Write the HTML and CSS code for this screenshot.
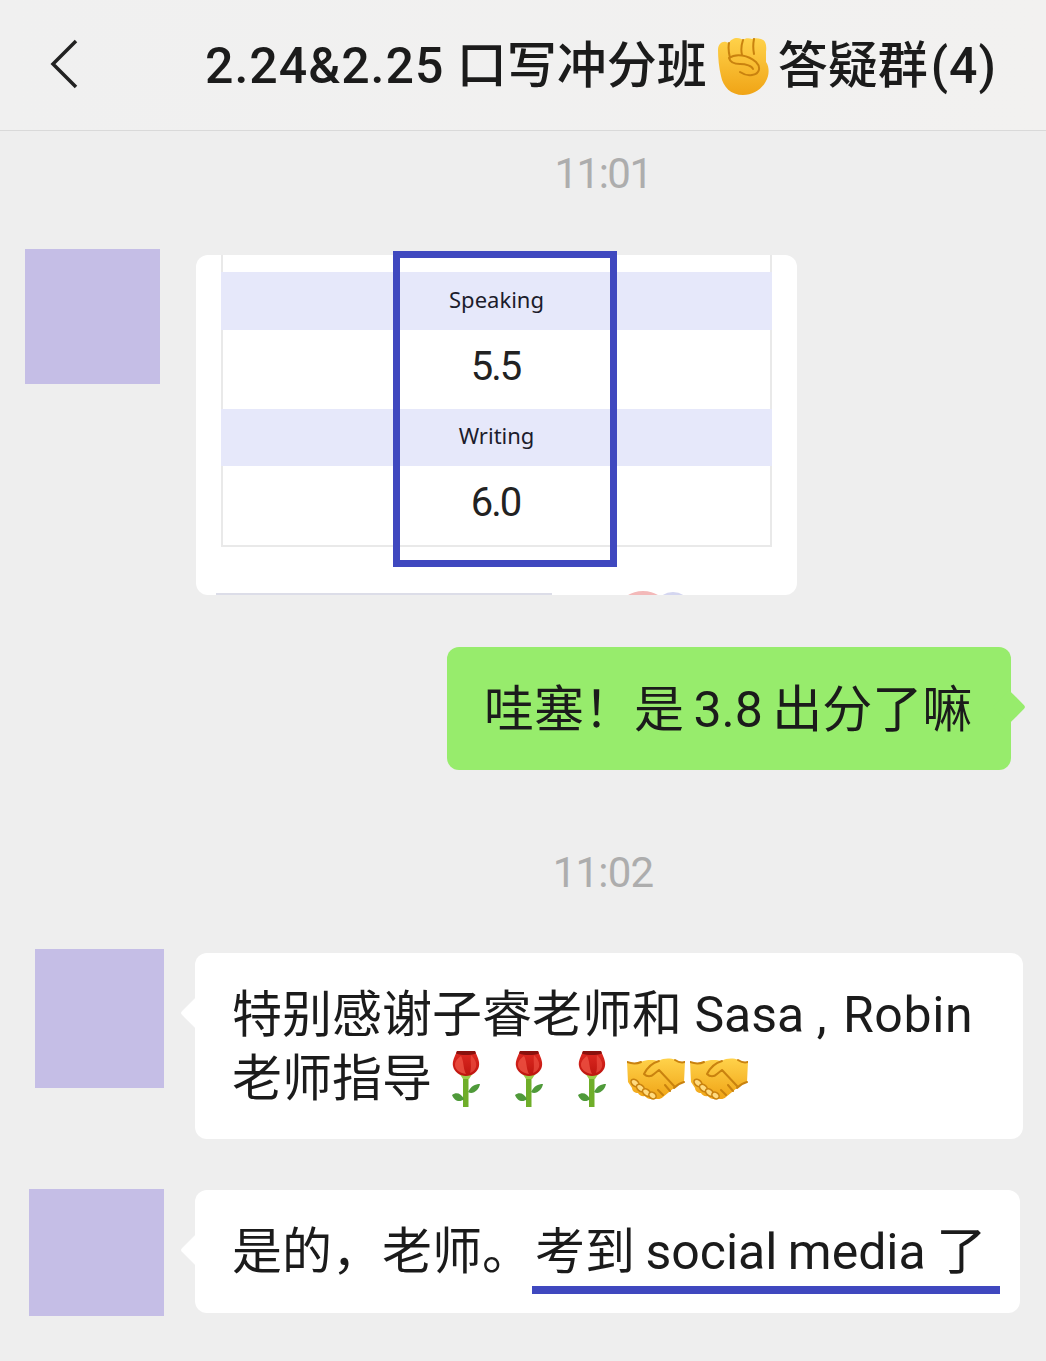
FILE: index.html
```html
<!DOCTYPE html>
<html lang="zh-CN">
<head>
    <meta charset="UTF-8">
    <title>答疑群</title>
    <link rel="stylesheet" href="styles.css">
</head>
<body>
    <svg class="defs" width="0" height="0" aria-hidden="true">
        <defs>
            <linearGradient id="skin" x1="0" y1="0" x2="0" y2="1">
                <stop offset="0" stop-color="#ffd24a"/>
                <stop offset="1" stop-color="#f0a416"/>
            </linearGradient>
            <linearGradient id="petal" x1="0" y1="0" x2="0" y2="1">
                <stop offset="0" stop-color="#e02a22"/>
                <stop offset="1" stop-color="#bd150f"/>
            </linearGradient>
            <symbol id="fist" viewBox="0 0 53 57">
                <path fill="url(#skin)" d="M2 12C2 6 6 3 10 4l3 1c1-3 5-5 8-5 3 0 5 1 6 2 2-2 6-2 9-1 2-1 6-1 9 0 4 1 6 5 5 13v10c3 4 3 10 2 14C49 49 39 57 27 57 15 57 7 49 5 38 3 30 2 20 2 12z"/>
                <path fill="none" stroke="#c9820f" stroke-width="2" stroke-linecap="round" stroke-linejoin="round" d="M13 5c-1 5 0 11 1 15M27 2c-2 6-2 11-1 15M38 1c-1 5-1 10 0 15M13 20c7-5 19-3 27 4 5 5 4 12-4 13-5 1-9-1-12-3M13 20c1 4 5 6 11 6 6 0 12 2 13 5"/>
            </symbol>
            <symbol id="rose" viewBox="0 0 28 58">
                <path fill="#6fae29" d="M11 24h5.500v33H11z"/>
                <path fill="#4f9a3a" d="M12 49C9 43 4 42 0 45c2 6 8 8 12 4zM16 42c3-6 7-8 12-8-1 6-7 11-12 8z"/>
                <path fill="#9ccc4a" d="M7 23h14l-4 6h-6z"/>
                <path fill="url(#petal)" d="M5 1h18c2 5 5 10 4 15-1 6-7 10-13 10S2 22 1 16C0 11 3 6 5 1z"/>
                <path fill="#8a110d" d="M5 1h18l1 2.500c-6 2-14 2-20 0z"/>
                <path fill="#ee5244" d="M9 6c3 5 2 13 5 18-7-1-11-5-11-9 0-4 3-7 6-9z" opacity=".8"/>
                <path fill="#ee5244" d="M19 5c4 4 6 8 5 12-1 3-3 5-6 6 2-6 0-12 1-18z" opacity=".65"/>
            </symbol>
            <symbol id="shake" viewBox="0 0 58 42">
                <path fill="url(#skin)" d="M0 4c5 2 10 2 14 0 6-3 13-2 18-1 4-3 12-3 16-1 3 2 7 3 10 2l-1 20c-4 1-7 3-10 6l-11 9c-3 3-7 2-9 1-3 2-7 1-9-2-3 1-6-1-7-3-3 0-6-2-6-5l-4-6z"/>
                <path fill="none" stroke="#c9820f" stroke-width="2" stroke-linecap="round" stroke-linejoin="round" d="M0 4c5 2 10 2 14 0M48 2c3 2 7 3 10 2M32 3c-7 2-12 7-15 13 3 3 7 3 10 0l5-4 15 16M38 27l5 6M31 32l5 5M57 24c-4 1-7 3-10 6"/>
                <g fill="#ffdb80" stroke="#c9820f" stroke-width="1.600">
                    <ellipse cx="8" cy="25" rx="4.500" ry="3" transform="rotate(40 8 25)"/>
                    <ellipse cx="13.500" cy="30" rx="4.500" ry="3" transform="rotate(40 13.500 30)"/>
                    <ellipse cx="19.500" cy="34.500" rx="4.500" ry="3" transform="rotate(40 19.500 34.500)"/>
                    <ellipse cx="25.500" cy="37.500" rx="4" ry="3" transform="rotate(40 25.500 37.500)"/>
                </g>
            </symbol>
        </defs>
    </svg>

    <header class="topbar">
        <svg class="back" viewBox="0 0 30 50" width="30" height="50">
            <path d="M27 2 4 25l23 23" fill="none" stroke="#222" stroke-width="3.500"/>
        </svg>
        <h1 class="title"><span class="title-num">2.24&amp;2.25</span> 口写冲分班<svg class="fist"><use href="#fist"/></svg>答疑群<span class="title-count">(4)</span></h1>
    </header>

    <main class="chat">
        <div class="time time-first">11:01</div>

        <div class="row row-card">
            <div class="avatar avatar-a"></div>
            <div class="card">
                <div class="table">
                    <div class="band band-top"></div>
                    <div class="band band-head"><span>Speaking</span></div>
                    <div class="band band-score"><span>5.5</span></div>
                    <div class="band band-head band-second"><span>Writing</span></div>
                    <div class="band band-score"><span>6.0</span></div>
                </div>
                <div class="next-sliver">
                    <span class="sliver-bar"></span>
                    <span class="sliver-red"></span>
                    <span class="sliver-blue"></span>
                </div>
                <div class="highlight"></div>
            </div>
        </div>

        <div class="row row-mine">
            <div class="bubble bubble-green">哇塞！是 3.8 出分了嘛</div>
        </div>

        <div class="time time-second">11:02</div>

        <div class="row row-thanks">
            <div class="avatar avatar-b"></div>
            <div class="bubble bubble-white bubble-thanks">
                <div>特别感谢子睿老师和 Sasa , <span class="robin">Robin</span></div>
                <div class="emoji-line">老师指导
                    <svg class="rose"><use href="#rose"/></svg>
                    <svg class="rose"><use href="#rose"/></svg>
                    <svg class="rose"><use href="#rose"/></svg>
                    <svg class="shake"><use href="#shake"/></svg>
                    <svg class="shake"><use href="#shake"/></svg>
                </div>
            </div>
        </div>

        <div class="row row-reply">
            <div class="avatar avatar-c"></div>
            <div class="bubble bubble-white bubble-reply">
                是的，老师。<span class="marked">考到 social media 了</span>
            </div>
        </div>
    </main>
</body>
</html>
```

FILE: styles.css
```css
body {
    margin: 0;
    background-color: #eeeeee;
    font-family: Roboto, "Noto Sans CJK SC", sans-serif;
    color: #1b1b1b;
}

.defs {
    position: absolute;
}

.topbar {
    display: flex;
    align-items: center;
    height: 130px;
    padding-left: 49px;
    background: linear-gradient(90deg, #f0f0f0, #f2f1f0);
    border-bottom: 1px solid #d9d9d9;
}

.back {
    flex: none;
    margin-top: -3px;
}

.title {
    display: flex;
    align-items: center;
    margin: 2px 0 0 126px;
    font-size: 50px;
    font-weight: 500;
    line-height: 60px;
    white-space: pre;
}

.title-num {
    letter-spacing: 1px;
}

.title-count {
    margin-left: 3px;
    letter-spacing: 1px;
}

.fist {
    width: 53px;
    height: 57px;
    margin: 0 9px 0 9px;
}

.chat {
    padding-bottom: 40px;
}

.time {
    padding-left: 160px;
    text-align: center;
    font-size: 42px;
    line-height: 50px;
    letter-spacing: -1.500px;
    color: #adadad;
}

.time-first {
    margin-top: 18px;
}

.time-second {
    margin-top: 78px;
    letter-spacing: -.8px;
}

.row {
    display: flex;
    align-items: flex-start;
}

.row-card {
    margin-top: 50px;
}

.row-mine {
    justify-content: flex-end;
    margin-top: 52px;
    padding-right: 35px;
}

.row-thanks {
    margin-top: 51px;
}

.row-reply {
    margin-top: 50px;
}

.avatar {
    flex: none;
    background-color: #c5bee6;
}

.avatar-a {
    width: 135px;
    height: 135px;
    margin: 0 36px 0 25px;
}

.avatar-b {
    width: 129px;
    height: 139px;
    margin: 0 31px 0 35px;
}

.avatar-c {
    width: 135px;
    height: 127px;
    margin: 0 31px 0 29px;
}

/* picture pasted into the chat */
.card {
    position: relative;
    box-sizing: border-box;
    width: 601px;
    height: 340px;
    margin-top: 6px;
    padding: 0 25px;
    background-color: #ffffff;
    border-radius: 12px;
}

.table {
    box-sizing: border-box;
    height: 292px;
    border: solid #e9e9e9;
    border-width: 0 2px 2px;
}

.band {
    display: flex;
    align-items: center;
    justify-content: center;
    margin: 0 -2px;
}

.band-top {
    height: 17px;
    margin: 0;
}

.band-head {
    box-sizing: border-box;
    height: 58px;
    padding-bottom: 4px;
    background-color: #e6e8fa;
    font-family: "Noto Sans", sans-serif;
    font-size: 22px;
    color: #1c1c2c;
}

.band-second {
    height: 57px;
    padding-bottom: 5px;
}

.band-score {
    box-sizing: border-box;
    height: 79px;
    padding: 0 2px 6px 0;
    margin: 0;
    font-size: 40px;
    letter-spacing: -2px;
    color: #222222;
}

.highlight {
    position: absolute;
    top: -4px;
    left: 197px;
    box-sizing: border-box;
    width: 224px;
    height: 316px;
    border: 7px solid #3f48bf;
}

.next-sliver {
    position: absolute;
    left: 20px;
    right: 0;
    bottom: 0;
    height: 4px;
    overflow: hidden;
}

.sliver-bar {
    position: absolute;
    left: 0;
    bottom: 0;
    width: 336px;
    height: 2px;
    background-color: #dcdde8;
}

.sliver-red {
    position: absolute;
    left: 405px;
    top: 0;
    width: 44px;
    height: 30px;
    border-radius: 50%;
    background-color: #f3b9b9;
}

.sliver-blue {
    position: absolute;
    left: 440px;
    top: 1px;
    width: 34px;
    height: 30px;
    border-radius: 50%;
    background-color: #d4d6f0;
}

/* message bubbles */
.bubble {
    position: relative;
    box-sizing: border-box;
    border-radius: 12px;
    font-size: 50px;
    line-height: 64px;
}

.bubble::after {
    content: "";
    position: absolute;
    top: 60px;
    width: 24px;
    height: 24px;
    background-color: inherit;
    border-radius: 3px;
    transform: translateY(-50%) rotate(45deg);
}

.bubble-green {
    width: 564px;
    height: 123px;
    padding: 31px 0 0 37px;
    background-color: #97ec6c;
    white-space: nowrap;
    word-spacing: -3px;
}

.bubble-green::after {
    right: -10px;
}

.bubble-white {
    background-color: #ffffff;
}

.bubble-white::after {
    left: -10px;
}

.bubble-thanks {
    width: 828px;
    height: 186px;
    margin-top: 4px;
    padding: 30px 0 0 37px;
}

.robin {
    margin-left: 4px;
    letter-spacing: .6px;
}

.emoji-line {
    display: flex;
    align-items: center;
}

.rose {
    width: 28px;
    height: 58px;
    margin-right: 35px;
}

.rose:first-of-type {
    margin-left: 20px;
}

.shake {
    width: 58px;
    height: 42px;
    margin-right: 5px;
}

.rose + .shake {
    margin-left: -14px;
}

.bubble-reply {
    width: 825px;
    height: 123px;
    margin-top: 1px;
    padding: 30px 0 0 37px;
    white-space: nowrap;
}

.marked {
    position: relative;
    margin-left: 3px;
    word-spacing: -2px;
}

.marked::after {
    content: "";
    position: absolute;
    left: -3px;
    right: -14px;
    bottom: -13px;
    height: 8px;
    background-color: #3f48bf;
}
```
